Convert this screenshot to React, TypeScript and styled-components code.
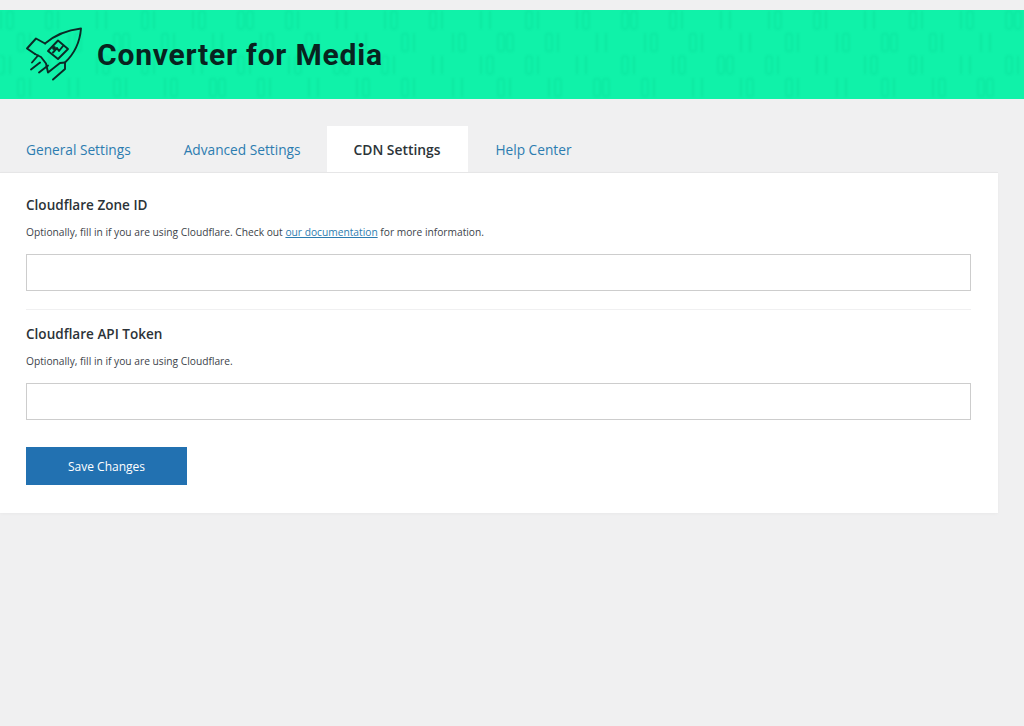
import React from 'react';
import styled, { createGlobalStyle } from 'styled-components';

const GlobalStyle = createGlobalStyle`
  html, body {
    margin: 0;
    padding: 0;
    background: #f0f0f1;
  }
  body {
    font-family: "Open Sans", "Noto Sans", "Liberation Sans", sans-serif;
    color: #2c3338;
  }
`;

const Page = styled.div`
  min-height: 726px;
  padding-top: 10px;
  box-sizing: border-box;
`;

const Banner = styled.header`
  position: relative;
  height: 89px;
  background: #10f2a9;
  display: flex;
  align-items: center;
  overflow: hidden;
`;

const BannerPattern = styled.svg`
  position: absolute;
  inset: 0;
  width: 100%;
  height: 100%;
  filter: blur(1.3px);
`;

const BrandRow = styled.div`
  position: relative;
  display: flex;
  align-items: center;
  gap: 14px;
  padding-left: 25px;
`;

const Title = styled.h1`
  margin: 0;
  font-family: Roboto, "Liberation Sans", sans-serif;
  font-size: 30px;
  line-height: 32px;
  font-weight: 700;
  letter-spacing: 0.8px;
  color: #08231f;
`;

const Tabs = styled.nav`
  display: flex;
  gap: 1px;
  margin-top: 27px;
  height: 46px;
`;

const Tab = styled.a<{ $active?: boolean }>`
  display: flex;
  align-items: center;
  padding: 0 ${p => (p.$active ? '28px' : '26px')} 0 26px;
  font-size: ${p => (p.$active ? '13.85px' : '13.7px')};
  font-weight: ${p => (p.$active ? 600 : 400)};
  color: ${p => (p.$active ? '#2c3338' : '#2c7cb0')};
  background: ${p => (p.$active ? '#fff' : 'transparent')};
  cursor: pointer;
`;

const Card = styled.main`
  width: 998px;
  height: 341px;
  box-sizing: border-box;
  padding: 22px 27px 0 26px;
  background: #fff;
  box-shadow: 0 1px 3px rgba(0, 0, 0, 0.03);
  border-top: 1px solid #e6e6e7;
`;

const Field = styled.section`
  display: flex;
  flex-direction: column;
`;

const FieldTitle = styled.h2`
  margin: 0;
  font-size: 13.55px;
  line-height: 20px;
  font-weight: 600;
  color: #2c3338;
`;

const Hint = styled.p`
  margin: 9px 0 0;
  font-size: 10.22px;
  line-height: 16px;
  color: #3c434a;
`;

const DocLink = styled.a`
  color: #2c7cb0;
  text-decoration: underline;
`;

const TextInput = styled.input`
  margin-top: 14px;
  height: 37px;
  box-sizing: border-box;
  width: 100%;
  padding: 0 10px;
  border: 1px solid #cdcdcd;
  background: #fff;
  outline: none;
`;

const Divider = styled.hr`
  margin: 18px 0 14px;
  border: 0;
  border-top: 1px solid #f0f0f1;
`;

const SaveButton = styled.button`
  display: block;
  margin-top: 27px;
  width: 161px;
  height: 38px;
  border: 0;
  background: #2271b1;
  color: #fff;
  font-family: inherit;
  font-size: 12px;
  font-weight: 400;
  cursor: pointer;
`;

const digits = ['10', '01', '11', '01', '10', '00', '01', '11'];

const Pattern = () => {
  const bars: React.ReactNode[] = [];
  for (let row = 0; row < 4; row++) {
    const y = 1 + row * 22.5;
    const shift = row % 2 ? 20 : 0;
    for (let col = 0; col < 22; col++) {
      const x = col * 48 + shift;
      const pair = digits[(row * 3 + col) % digits.length];
      [0, 1].forEach(i => {
        const bx = x + i * 9;
        bars.push(
          pair[i] === '1' ? (
            <rect key={`${row}-${col}-${i}`} x={bx} y={y} width="2" height="18" />
          ) : (
            <rect key={`${row}-${col}-${i}`} x={bx - 2} y={y} width="6" height="18" rx="3" fill="none" stroke="#08d996" strokeWidth="1.6" />
          )
        );
      });
    }
  }
  return (
    <BannerPattern aria-hidden="true">
      <g fill="#08d996" opacity="0.38">{bars}</g>
    </BannerPattern>
  );
};

const RocketLogo = () => (
  <svg width="58" height="56" viewBox="0 0 58 56" fill="none" stroke="#0b2a26" strokeWidth="1.9" strokeLinejoin="round" strokeLinecap="round">
    <path d="M20 16.5 L11 11.5 L2 21.5 L10 27" />
    <path d="M20 16.5 C30 8 43 3 56 1.5 C55 14 50 26 40 35.5 L40 42 L28 52.5" />
    <path d="M10 27 L16 30 L21 36.5 L23 45.5 L35 36 L40 35.5" />
    <path d="M23 24 L33 13.5 L43 22 L33 32 Z" />
    <path d="M28 25.5 L32 21 L34 24 L38 19" />
    <circle cx="29" cy="21" r="1" />
    <path d="M13 28.5 L7 35.5" />
    <path d="M15 35.5 L6 42.5" />
    <path d="M23 38.5 L14 45.5" />
  </svg>
);

const App: React.FC = () => (
  <>
    <GlobalStyle />
    <Page>
      <Banner>
        <Pattern />
        <BrandRow>
          <RocketLogo />
          <Title>Converter for Media</Title>
        </BrandRow>
      </Banner>
      <Tabs>
        <Tab>General Settings</Tab>
        <Tab>Advanced Settings</Tab>
        <Tab $active>CDN Settings</Tab>
        <Tab>Help Center</Tab>
      </Tabs>
      <Card>
        <Field>
          <FieldTitle>Cloudflare Zone ID</FieldTitle>
          <Hint>
            Optionally, fill in if you are using Cloudflare. Check out <DocLink>our documentation</DocLink> for more information.
          </Hint>
          <TextInput type="text" />
        </Field>
        <Divider />
        <Field>
          <FieldTitle>Cloudflare API Token</FieldTitle>
          <Hint>Optionally, fill in if you are using Cloudflare.</Hint>
          <TextInput type="text" />
        </Field>
        <SaveButton>Save Changes</SaveButton>
      </Card>
    </Page>
  </>
);

export default App;
